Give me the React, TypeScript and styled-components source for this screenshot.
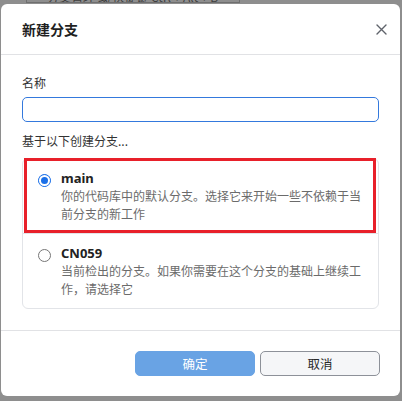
import React from "react";
import styled, { createGlobalStyle } from "styled-components";

const GlobalStyle = createGlobalStyle`
  html, body { margin: 0; padding: 0; }
  body {
    background: #8e8e8e;
    font-family: "Noto Sans", "Noto Sans CJK SC", sans-serif;
    width: 402px;
    height: 401px;
    overflow: hidden;
  }
`;

const Page = styled.div`
  position: relative;
  width: 402px;
  height: 401px;
  padding: 4px 0 0 1px;
  box-sizing: border-box;
`;

const BackdropHint = styled.div`
  position: absolute;
  top: -11px;
  left: 26px;
  width: 214px;
  height: 14px;
  border: 1px solid #6f6f6f;
  padding-left: 20px;
  box-sizing: border-box;
  font-size: 12px;
  line-height: 14px;
  color: #3e3e3e;
  font-family: "Noto Sans CJK SC", sans-serif;
  white-space: nowrap;
  overflow: hidden;
`;

const Dialog = styled.div`
  position: relative;
  width: 399px;
  height: 392px;
  background: #ffffff;
  border-radius: 6px;
  display: flex;
  flex-direction: column;
  box-sizing: border-box;
`;

const Header = styled.div`
  height: 50px;
  display: flex;
  align-items: center;
  justify-content: space-between;
  padding: 0 13px 0 21px;
  border-bottom: 1px solid #e1e2e5;
  flex-shrink: 0;
`;

const Title = styled.div`
  font-family: "Noto Sans CJK SC", sans-serif;
  font-weight: 700;
  font-size: 14px;
  color: #1f1f1f;
`;

const CloseButton = styled.button`
  border: none;
  background: transparent;
  padding: 0;
  width: 12px;
  height: 12px;
  display: flex;
  align-items: center;
  justify-content: center;
  cursor: pointer;
  margin-top: 1px;
`;

const Body = styled.div`
  padding: 19px 21px 21px;
  display: flex;
  flex-direction: column;
`;

const Label = styled.div<{ $gap?: number }>`
  font-family: "Noto Sans CJK SC", sans-serif;
  font-size: 12px;
  line-height: 18px;
  color: #333;
  margin-top: ${(p) => p.$gap ?? 0}px;
`;

const Input = styled.input`
  margin-top: 5px;
  height: 25px;
  box-sizing: border-box;
  border: 1px solid #3479dd;
  border-radius: 5px;
  outline: none;
  padding: 0 8px;
  font-size: 12px;
`;

const OptionList = styled.div`
  margin-top: 8px;
  border: 1px solid #e2e4e8;
  border-radius: 6px;
  display: flex;
  flex-direction: column;
`;

const Option = styled.div<{ $highlight?: boolean; $divider?: boolean }>`
  position: relative;
  display: flex;
  align-items: flex-start;
  gap: 10px;
  padding: 10px 12px 11px 15px;
  border-top: ${(p) => (p.$divider ? "1px solid #e2e4e8" : "none")};
  ${(p) =>
    p.$highlight &&
    `
    &::after {
      content: "";
      position: absolute;
      left: 1px;
      right: 2px;
      top: -1px;
      bottom: 0px;
      border: 3px solid #e8202a;
      pointer-events: none;
    }
  `}
`;

const Radio = styled.span<{ $checked?: boolean }>`
  flex-shrink: 0;
  width: 13px;
  height: 13px;
  margin-top: 5px;
  border-radius: 50%;
  box-sizing: border-box;
  border: ${(p) => (p.$checked ? "1px solid #1a6fe8" : "1px solid #767676")};
  background: ${(p) => (p.$checked ? "#1a6fe8" : "#fff")};
  display: flex;
  align-items: center;
  justify-content: center;
  &::after {
    content: "";
    display: ${(p) => (p.$checked ? "block" : "none")};
    width: 7px;
    height: 7px;
    border-radius: 50%;
    background: #1a6fe8;
    box-shadow: 0 0 0 2px #fff;
  }
`;

const OptionText = styled.div`
  display: flex;
  flex-direction: column;
  width: 305px;
`;

const OptionName = styled.div`
  font-family: "Noto Sans", "Noto Sans CJK SC", sans-serif;
  font-weight: 700;
  font-size: 13px;
  line-height: 18px;
  color: #222;
`;

const OptionDesc = styled.div`
  font-family: "Noto Sans CJK SC", sans-serif;
  font-size: 12px;
  line-height: 17.5px;
  color: #6b6b6b;
`;

const Footer = styled.div`
  margin-top: auto;
  border-top: 1px solid #e1e2e5;
  padding: 20px 20px 21px;
  display: flex;
  justify-content: flex-end;
  gap: 5px;
`;

const Button = styled.button<{ $primary?: boolean }>`
  width: 120px;
  height: 25px;
  border-radius: 5px;
  font-family: "Noto Sans CJK SC", sans-serif;
  font-size: 12.5px;
  padding: 0;
  cursor: pointer;
  border: ${(p) => (p.$primary ? "1px solid #69a3e4" : "1px solid #8d9199")};
  background: ${(p) => (p.$primary ? "#69a3e4" : "#f5f6f8")};
  color: ${(p) => (p.$primary ? "#ffffff" : "#2a2a2a")};
`;

export default function App() {
  return (
    <>
      <GlobalStyle />
      <Page>
        <BackdropHint>分支管理 或 快捷键 Ctrl + Alt + B</BackdropHint>
        <Dialog>
          <Header>
            <Title>新建分支</Title>
            <CloseButton aria-label="关闭">
              <svg width="11" height="11" viewBox="0 0 11 11">
                <path d="M1 1 L10 10 M10 1 L1 10" stroke="#5f636b" strokeWidth="1.4" strokeLinecap="round" />
              </svg>
            </CloseButton>
          </Header>
          <Body>
            <Label>名称</Label>
            <Input />
            <Label $gap={10}>基于以下创建分支...</Label>
            <OptionList>
              <Option $highlight>
                <Radio $checked />
                <OptionText>
                  <OptionName>main</OptionName>
                  <OptionDesc>你的代码库中的默认分支。选择它来开始一些不依赖于当前分支的新工作</OptionDesc>
                </OptionText>
              </Option>
              <Option $divider>
                <Radio />
                <OptionText>
                  <OptionName>CN059</OptionName>
                  <OptionDesc>当前检出的分支。如果你需要在这个分支的基础上继续工作，请选择它</OptionDesc>
                </OptionText>
              </Option>
            </OptionList>
          </Body>
          <Footer>
            <Button $primary>确定</Button>
            <Button>取消</Button>
          </Footer>
        </Dialog>
      </Page>
    </>
  );
}
